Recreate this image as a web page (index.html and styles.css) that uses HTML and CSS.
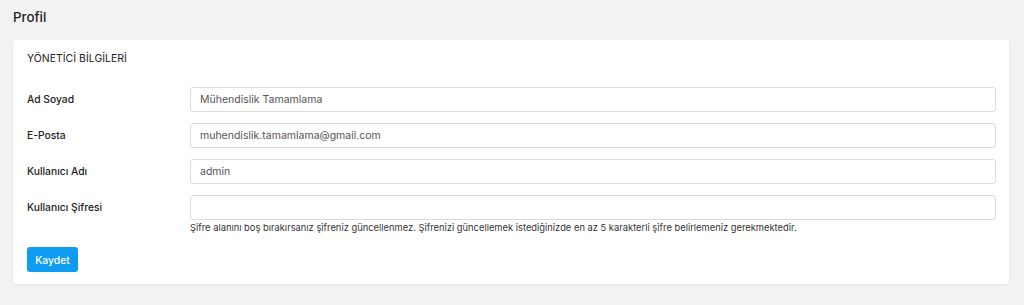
FILE: index.html
```html
<!DOCTYPE html>
<html lang="tr">
<head>
<meta charset="utf-8">
<title>Profil</title>
<link rel="stylesheet" href="styles.css">
</head>
<body>
<div class="page">
  <h1 class="page-title">Profil</h1>
  <div class="card">
    <h2 class="card-title">YÖNETİCİ BİLGİLERİ</h2>
    <form class="form">
      <div class="row">
        <label class="label">Ad Soyad</label>
        <div class="field"><input class="input" type="text" value="Mühendislik Tamamlama"></div>
      </div>
      <div class="row">
        <label class="label">E-Posta</label>
        <div class="field"><input class="input" type="text" value="muhendislik.tamamlama@gmail.com"></div>
      </div>
      <div class="row">
        <label class="label">Kullanıcı Adı</label>
        <div class="field"><input class="input" type="text" value="admin"></div>
      </div>
      <div class="row">
        <label class="label">Kullanıcı Şifresi</label>
        <div class="field">
          <input class="input" type="password" value="">
          <p class="help">Şifre alanını boş bırakırsanız şifreniz güncellenmez. Şifrenizi güncellemek istediğinizde en az 5 karakterli şifre belirlemeniz gerekmektedir.</p>
        </div>
      </div>
      <button class="btn" type="button">Kaydet</button>
    </form>
  </div>
</div>
</body>
</html>
```
FILE: styles.css
```css
* { box-sizing: border-box; }
html, body { margin: 0; padding: 0; }
body {
  background: #f2f2f2;
  font-family: Inter, "Liberation Sans", sans-serif;
  color: #222;
  height: 305px;
  overflow: hidden;
}
.page {
  padding: 8px 15px 0 13px;
}
.page-title {
  margin: 0;
  font-size: 13.3px;
  font-weight: 500;
  line-height: 18px;
  color: #222;
}
.card {
  margin-top: 14px;
  background: #fff;
  border-radius: 3px;
  box-shadow: 0 1px 3px rgba(0,0,0,0.06);
  padding: 12px 13px 12px 14px;
}
.card-title {
  margin: 0;
  font-size: 10.5px;
  font-weight: 400;
  line-height: 14px;
  color: #222;
}
.form {
  margin-top: 21px;
  display: flex;
  flex-direction: column;
}
.row {
  display: flex;
  align-items: flex-start;
  margin-bottom: 11px;
}
.row:last-of-type { margin-bottom: 13px; }
.label {
  width: 163px;
  flex: none;
  font-size: 10.3px;
  font-weight: 500;
  line-height: 25px;
  color: #222;
}
.field { flex: 1; }
.input {
  display: block;
  width: 100%;
  height: 25px;
  border: 1px solid #dcdcdc;
  border-radius: 3px;
  padding: 0 9px;
  font-family: Inter, "Liberation Sans", sans-serif;
  font-size: 10.5px;
  color: #555;
  background: #fff;
  outline: none;
}
.help {
  margin: 2px 0 0;
  font-size: 9.35px;
  line-height: 12px;
  color: #333;
}
.btn {
  align-self: flex-start;
  width: 51px;
  height: 25px;
  background: #0e9cf3;
  border: none;
  border-radius: 3px;
  color: #fff;
  font-family: Inter, "Liberation Sans", sans-serif;
  font-size: 10.3px;
  font-weight: 500;
  padding: 0;
}
```
